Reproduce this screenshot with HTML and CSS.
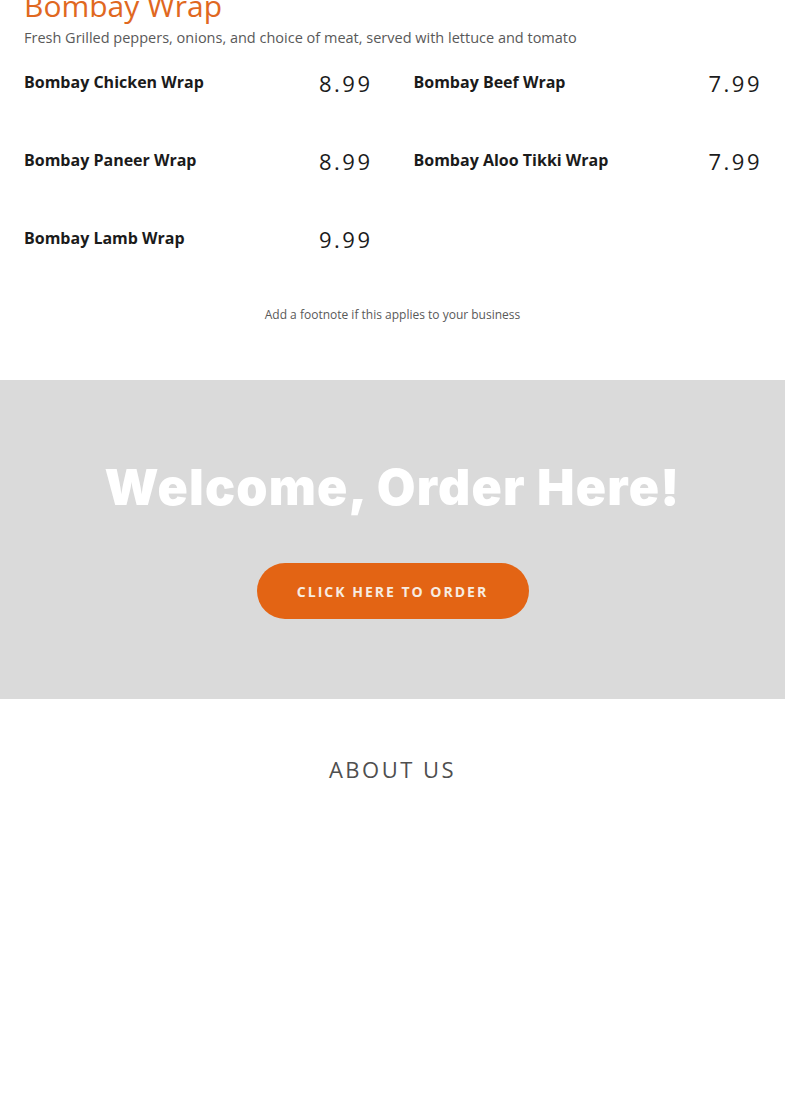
FILE: index.html
```html
<!DOCTYPE html>
<html>
<head>
<meta charset="utf-8">
<link rel="stylesheet" href="styles.css">
</head>
<body>
<section class="menu">
  <h2 class="menu-title">Bombay Wrap</h2>
  <p class="menu-desc">Fresh Grilled peppers, onions, and choice of meat, served with lettuce and tomato</p>
  <div class="items">
    <div class="item"><span class="name">Bombay Chicken Wrap</span><span class="price">8.99</span></div>
    <div class="item"><span class="name">Bombay Beef Wrap</span><span class="price">7.99</span></div>
    <div class="item"><span class="name">Bombay Paneer Wrap</span><span class="price">8.99</span></div>
    <div class="item"><span class="name">Bombay Aloo Tikki Wrap</span><span class="price">7.99</span></div>
    <div class="item"><span class="name">Bombay Lamb Wrap</span><span class="price">9.99</span></div>
  </div>
  <p class="footnote">Add a footnote if this applies to your business</p>
</section>
<section class="order">
  <h1 class="order-title">Welcome, Order Here!</h1>
  <a class="order-btn" href="#">CLICK HERE TO ORDER</a>
</section>
<section class="about">
  <h2 class="about-title">ABOUT US</h2>
</section>
</body>
</html>
```
FILE: styles.css
```css
html, body {
  margin: 0;
  padding: 0;
  background: #fff;
  font-family: "Open Sans", "Liberation Sans", sans-serif;
}
.menu {
  padding: 0 24px 56px;
}
.menu-title {
  margin: -15px 0 0;
  font-size: 30px;
  font-weight: 400;
  line-height: 42px;
  color: #e0681f;
}
.menu-desc {
  margin: 0;
  font-size: 14.5px;
  line-height: 22px;
  color: #595959;
}
.items {
  display: grid;
  grid-template-columns: 1fr 1fr;
  column-gap: 42px;
  margin-top: 21px;
}
.item {
  display: flex;
  justify-content: space-between;
  align-items: flex-start;
  height: 78px;
}
.name {
  font-size: 16px;
  font-weight: 700;
  color: #1b1b1b;
  line-height: 24px;
}
.price {
  font-size: 22px;
  letter-spacing: 2.5px;
  color: #1b1b1b;
  line-height: 26px;
  margin-right: -1px;
}
.footnote {
  margin: 2px 0 0;
  text-align: center;
  font-size: 12px;
  color: #595959;
  line-height: 18px;
}
.order {
  background: #dadada;
  height: 319px;
  box-sizing: border-box;
  padding-top: 75px;
  display: flex;
  flex-direction: column;
  align-items: center;
}
.order-title {
  margin: 0;
  font-family: "Inter", "Open Sans", sans-serif;
  font-weight: 900;
  font-size: 50px;
  line-height: 64px;
  color: #fff;
  letter-spacing: 1.2px;
}
.order-btn {
  margin-top: 44px;
  display: flex;
  align-items: center;
  justify-content: center;
  width: 272px;
  height: 56px;
  border-radius: 28px;
  background: #e36414;
  color: #f7ece2;
  font-size: 14px;
  font-weight: 700;
  letter-spacing: 2px;
  text-decoration: none;
}
.about {
  height: 414px;
  padding-top: 52px;
  box-sizing: border-box;
}
.about-title {
  margin: 0;
  text-align: center;
  font-size: 22px;
  font-weight: 400;
  letter-spacing: 2.5px;
  color: #4f4f4f;
  line-height: 36px;
}
```
